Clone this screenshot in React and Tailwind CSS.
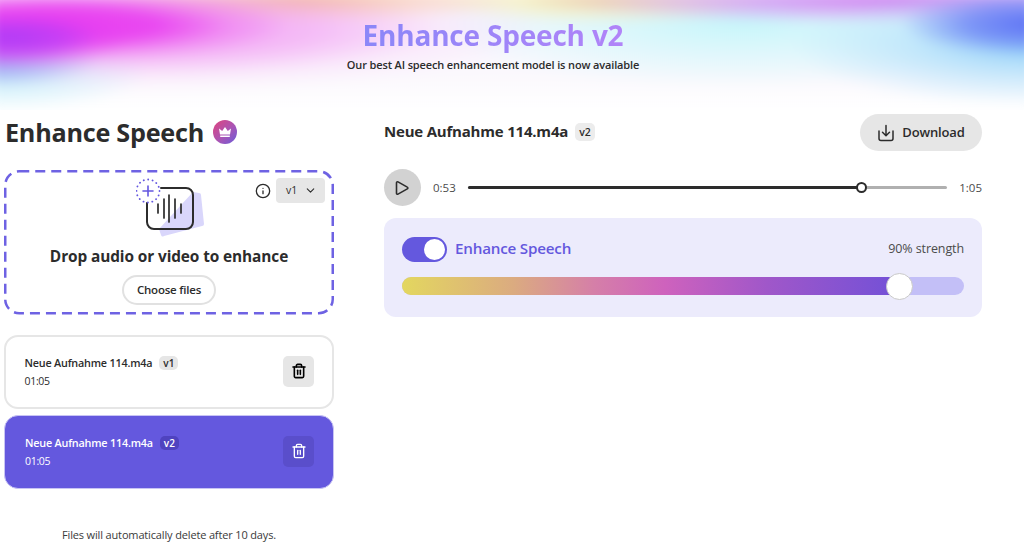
import React from 'react';
import { ChevronDown, Info, Trash2 } from 'lucide-react';

const headerBg =
  'bg-[radial-gradient(ellipse_120px_30px_at_20px_48px,#b03cf6_0%,rgba(190,60,246,0.75)_45%,rgba(220,60,243,0.25)_75%,rgba(232,60,240,0)_100%),radial-gradient(ellipse_240px_38px_at_60px_35px,#e83af0_0%,rgba(232,58,240,0.85)_45%,rgba(236,90,240,0.35)_75%,rgba(240,120,240,0)_100%),radial-gradient(ellipse_420px_62px_at_140px_40px,rgba(238,130,240,0.85)_0%,rgba(240,150,242,0.6)_45%,rgba(245,190,245,0.22)_75%,rgba(250,220,250,0)_100%),radial-gradient(ellipse_100px_26px_at_10px_70px,#7f9af5_0%,rgba(130,160,245,0.6)_50%,rgba(170,210,248,0)_100%),radial-gradient(ellipse_150px_40px_at_10px_82px,#bfeff8_0%,rgba(200,240,250,0.6)_50%,rgba(225,248,252,0)_100%),radial-gradient(ellipse_130px_32px_at_1040px_34px,#5d72f5_0%,rgba(100,120,245,0.7)_50%,rgba(150,140,245,0)_100%),radial-gradient(ellipse_240px_60px_at_1040px_56px,#93d2f9_0%,rgba(170,222,250,0.6)_50%,rgba(215,240,252,0)_100%),radial-gradient(ellipse_380px_24px_at_910px_10px,#cf82f1_0%,rgba(215,150,243,0.65)_50%,rgba(230,190,247,0)_100%),radial-gradient(ellipse_220px_24px_at_310px_10px,#f3bf8d_0%,rgba(248,205,160,0.6)_50%,rgba(252,225,200,0)_100%),radial-gradient(ellipse_180px_24px_at_610px_10px,#f6e69c_0%,rgba(250,238,180,0.6)_50%,rgba(252,245,215,0)_100%),radial-gradient(ellipse_320px_66px_at_750px_32px,#c6f6fa_0%,rgba(210,247,251,0.65)_50%,rgba(235,250,253,0)_100%),linear-gradient(180deg,#fcf7fe_0%,#fbf8fd_70%,#ffffff_100%)]';

function WaveIcon() {
  return (
    <svg width="70" height="60" viewBox="0 0 70 60" fill="none">
      <path d="M57 14l6 1a2 2 0 0 1 2 2l3 29a2 2 0 0 1-2 2L28 58a2 2 0 0 1-3-1l-2-6z" fill="#d9d6fb" />
      <path d="M11 25v19a7 7 0 0 0 7 7h32a7 7 0 0 0 7-7V17a7 7 0 0 0-7-7H25" stroke="#2c2c2c" strokeWidth="2" strokeLinecap="round" />
      <path d="M22 26v9M28 21v19M33 17v27M39 21v19M45 26v9" stroke="#2c2c2c" strokeWidth="1.7" strokeLinecap="round" />
      <circle cx="12" cy="13" r="11.5" stroke="#6457e0" strokeWidth="1.8" strokeDasharray="0.1 4.4" strokeLinecap="round" />
      <path d="M12 8v10M7 13h10" stroke="#6457e0" strokeWidth="1.6" strokeLinecap="round" />
    </svg>
  );
}

function CrownBadge() {
  return (
    <div className="w-6 h-6 rounded-full flex items-center justify-center bg-[linear-gradient(135deg,#e0447c,#a955b5_55%,#6a5bd8)]">
      <svg width="14" height="12" viewBox="0 0 14 12" fill="#fff">
        <path d="M1 2.5l3.2 2.6L7 1l2.8 4.1L13 2.5 12 8.5H2zM2.2 9.5h9.6V11H2.2z" />
      </svg>
    </div>
  );
}

function PlayIcon() {
  return (
    <svg width="16" height="16" viewBox="0 0 16 16" fill="none">
      <path d="M2.5 2.8a1 1 0 0 1 1.5-.9l9.3 5.2a1 1 0 0 1 0 1.8L4 14.1a1 1 0 0 1-1.5-.9z" stroke="#2c2c2c" strokeWidth="1.6" strokeLinejoin="round" />
    </svg>
  );
}

function DownloadIcon() {
  return (
    <svg width="18" height="18" viewBox="0 0 18 18" fill="none" stroke="#2c2c2c" strokeWidth="1.5" strokeLinecap="round" strokeLinejoin="round">
      <path d="M9 1.5v10M5.5 8.2L9 11.7l3.5-3.5" />
      <path d="M2 7v7.5A2 2 0 0 0 4 16.5h10a2 2 0 0 0 2-2V7" />
    </svg>
  );
}

function FileRow({ active, version }) {
  return (
    <div
      className={`h-[74px] rounded-[14px] flex items-center justify-between ${
        active
          ? 'bg-[#6458de] border border-[#c8c4f4] text-white pl-[20px] pr-[19px]'
          : 'bg-white border-[2.5px] border-[#e6e6e6] text-[#2c2c2c] pl-[18.5px] pr-[18px]'
      }`}
    >
      <div>
        <div className="flex items-center gap-[7px] h-[17px]">
          <span className="text-[10.8px] font-semibold tracking-[-0.2px]">Neue Aufnahme 114.m4a</span>
          <span
            className={`text-[10px] font-semibold rounded-[5px] px-[4px] h-[14px] leading-[14px] ${
              active ? 'bg-[#4f43bf]' : 'bg-[#e6e6e6]'
            }`}
          >
            {version}
          </span>
        </div>
        <div className="text-[10.5px] tracking-[-0.3px] mt-[1px] leading-[17px]">01:05</div>
      </div>
      <div className={`w-[31px] h-[31px] mb-[2px] rounded-[5px] flex items-center justify-center ${active ? 'bg-[#5a4ecb]' : 'bg-[#e6e6e6]'}`}>
        <Trash2 size={16} strokeWidth={active ? 2 : 2.4} className={active ? 'text-white' : 'text-black'} />
      </div>
    </div>
  );
}

export default function App() {
  return (
    <div className="w-[1024px] h-[556px] overflow-hidden bg-white font-['Open_Sans',sans-serif] text-[#2c2c2c]">
      <div className="relative h-[110px] overflow-hidden pt-[17px] pr-[38px] text-center">
        <div className={`absolute top-[-10px] left-[-10px] right-[-10px] bottom-0 blur-[6px] ${headerBg}`} />
        <h1 className="relative text-[28px] leading-[36px] font-bold tracking-[-0.2px] text-transparent bg-clip-text bg-[linear-gradient(90deg,#8b86f8,#b184f8)] w-fit mx-auto">
          Enhance Speech v2
        </h1>
        <p className="relative text-[11px] leading-[16px] font-semibold mt-[4px] text-[#2c2c2c] tracking-[-0.14px]">
          Our best AI speech enhancement model is now available
        </p>
      </div>

      <div className="flex pl-[4px] pt-[6px]">
        <div className="w-[330px] shrink-0">
          <div className="flex items-center gap-[9px] h-[32px]">
            <h2 className="text-[25.2px] font-bold tracking-[-0.25px] pl-[1px] leading-[32px]">Enhance Speech</h2>
            <CrownBadge />
          </div>

          <div className="relative h-[145px] mt-[22px] flex flex-col items-center">
            <svg className="absolute inset-0" width="330" height="145" fill="none">
              <rect x="1.25" y="1.25" width="327.5" height="142" rx="14" stroke="#6e62e3" strokeWidth="2.5" strokeDasharray="10 6" />
            </svg>
            <div className="absolute top-[8px] right-[9px] flex items-center gap-[5px]">
              <Info size={16} strokeWidth={2} className="text-[#2c2c2c]" />
              <div className="w-[49px] h-[25px] rounded-[4px] bg-[#e6e6e6] flex items-center justify-between pl-[10px] pr-[8px] text-[10.5px]">
                v1
                <ChevronDown size={13} strokeWidth={2} />
              </div>
            </div>
            <div className="mt-[8px] ml-[3px]">
              <WaveIcon />
            </div>
            <div className="text-[15.4px] font-bold leading-[22px] mt-[8px] tracking-[-0.1px]">Drop audio or video to enhance</div>
            <button className="mt-[7px] w-[94px] h-[30px] rounded-full bg-white border-2 border-[#e1e1e1] text-[11.5px] font-semibold tracking-[-0.2px]">
              Choose files
            </button>
          </div>

          <div className="mt-[20px] flex flex-col gap-[6px]">
            <FileRow version="v1" />
            <FileRow version="v2" active />
          </div>

          <p className="text-center text-[11px] mt-[38px] leading-[16px] tracking-[-0.15px] text-[#3a3a3a]">
            Files will automatically delete after 10 days.
          </p>
        </div>

        <div className="w-[598px] ml-[50px] shrink-0">
          <div className="flex items-center justify-between h-[37px] mt-[-2px]">
            <div className="flex items-center gap-[7px] pb-[2px]">
              <span className="text-[15px] font-bold tracking-[-0.2px]">Neue Aufnahme 114.m4a</span>
              <span className="text-[10.5px] font-semibold rounded-[5px] bg-[#ececec] px-[4px] h-[18px] leading-[18px]">v2</span>
            </div>
            <button className="w-[122px] h-[37px] rounded-full bg-[#e6e6e6] flex items-center justify-center gap-[7px] text-[13px] font-semibold tracking-[-0.15px]">
              <DownloadIcon />
              Download
            </button>
          </div>

          <div className="flex items-center mt-[18px] h-[37px]">
            <div className="w-[37px] h-[37px] rounded-full bg-[#d2d2d2] flex items-center justify-center">
              <PlayIcon />
            </div>
            <span className="text-[11.5px] ml-[12px] w-[35px] text-[#4b4b4b]">0:53</span>
            <div className="w-[480px] h-[3px] rounded-full bg-[#b0b0b0] relative">
              <div className="h-[3px] w-[392px] rounded-full bg-[#2c2c2c]" />
              <div className="absolute left-[388px] top-[-4px] w-[11px] h-[11px] rounded-full bg-white border-2 border-[#2c2c2c]" />
            </div>
            <span className="text-[11.5px] ml-[12px] text-[#4b4b4b]">1:05</span>
          </div>

          <div className="mt-[12px] h-[99px] rounded-[12px] bg-[#ecebfc] px-[18px] pt-[19px]">
            <div className="flex items-center justify-between h-[25px]">
              <div className="flex items-center gap-[8px]">
                <div className="w-[45px] h-[25px] rounded-full bg-[#6458de] flex items-center justify-end pr-[2px]">
                  <div className="w-[21px] h-[21px] rounded-full bg-white" />
                </div>
                <span className="text-[15.2px] font-semibold tracking-[-0.2px] text-[#6458de] pb-[3px]">Enhance Speech</span>
              </div>
              <span className="text-[12.5px] tracking-[-0.1px] text-[#4b4b4b]">90% strength</span>
            </div>
            <div className="relative mt-[15px] h-[18px] rounded-full bg-[#c3bff7]">
              <div className="h-[18px] w-[90%] rounded-l-full bg-[linear-gradient(90deg,#e3d75f_0%,#dbab80_22%,#d57fa8_38%,#ce62bd_52%,#a057c9_72%,#6f50d8_100%)]" />
              <div className="absolute left-[484px] top-[-4px] w-[27px] h-[27px] rounded-full bg-white border border-[#c9c9c9]" />
            </div>
          </div>
        </div>
      </div>
    </div>
  );
}
